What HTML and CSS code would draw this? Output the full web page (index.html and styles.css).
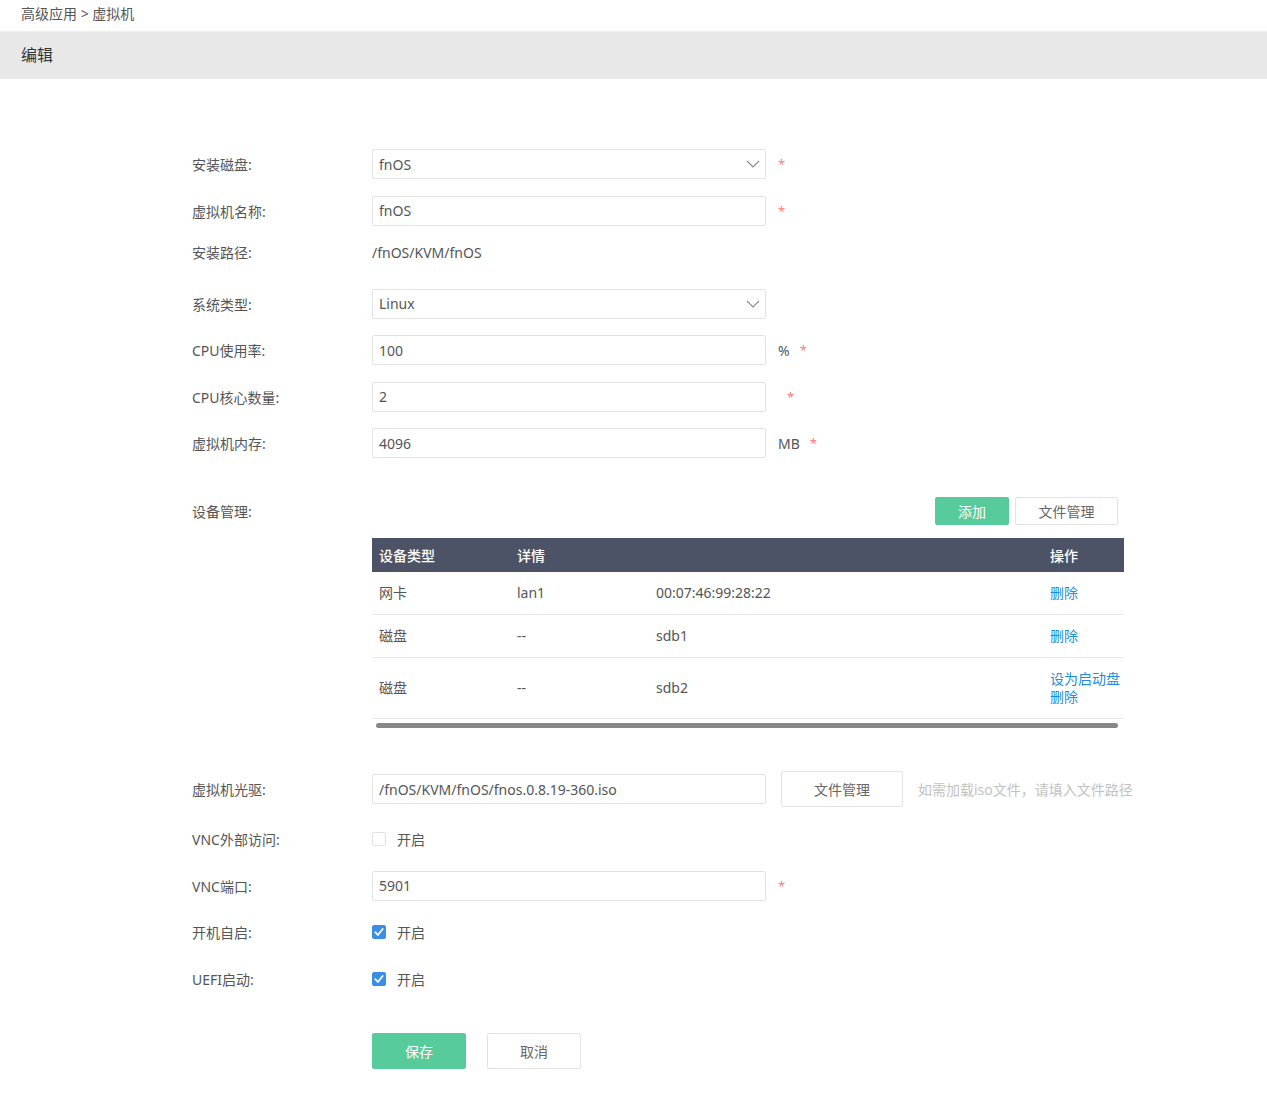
FILE: index.html
```html
<!DOCTYPE html>
<html lang="zh">
<head>
<meta charset="utf-8">
<title>编辑</title>
<link rel="stylesheet" href="styles.css">
</head>
<body>
<div class="crumb">高级应用 &gt; 虚拟机</div>
<div class="titlebar">编辑</div>
<main class="form">
  <div class="row">
    <div class="label">安装磁盘:</div>
    <div class="select"><span>fnOS</span><svg class="chev" viewBox="0 0 14 8" width="14" height="8"><path d="M1 1l6 6 6-6" fill="none" stroke="#888" stroke-width="1.1"/></svg></div>
    <span class="req r0">*</span>
  </div>
  <div class="row">
    <div class="label">虚拟机名称:</div>
    <div class="input">fnOS</div>
    <span class="req r0">*</span>
  </div>
  <div class="row top">
    <div class="label">安装路径:</div>
    <div class="plain">/fnOS/KVM/fnOS</div>
  </div>
  <div class="row">
    <div class="label">系统类型:</div>
    <div class="select"><span>Linux</span><svg class="chev" viewBox="0 0 14 8" width="14" height="8"><path d="M1 1l6 6 6-6" fill="none" stroke="#888" stroke-width="1.1"/></svg></div>
  </div>
  <div class="row">
    <div class="label">CPU使用率:</div>
    <div class="input">100</div>
    <span class="unit">%</span><span class="req">*</span>
  </div>
  <div class="row">
    <div class="label">CPU核心数量:</div>
    <div class="input">2</div>
    <span class="req r1">*</span>
  </div>
  <div class="row">
    <div class="label">虚拟机内存:</div>
    <div class="input">4096</div>
    <span class="unit">MB</span><span class="req">*</span>
  </div>

  <section class="devices">
    <div class="label dlabel">设备管理:</div>
    <div class="dbody">
      <div class="toolbar">
        <button class="btn green small">添加</button>
        <button class="btn white small">文件管理</button>
      </div>
      <table class="dtable">
        <thead>
          <tr><th class="c1">设备类型</th><th class="c2">详情</th><th class="c3"></th><th class="c4">操作</th></tr>
        </thead>
        <tbody>
          <tr><td>网卡</td><td>lan1</td><td>00:07:46:99:28:22</td><td><a>删除</a></td></tr>
          <tr><td>磁盘</td><td>--</td><td>sdb1</td><td><a>删除</a></td></tr>
          <tr><td>磁盘</td><td>--</td><td>sdb2</td><td><a>设为启动盘</a><br><a>删除</a></td></tr>
        </tbody>
      </table>
      <div class="scroll"><div class="thumb"></div></div>
    </div>
  </section>

  <div class="row tall">
    <div class="label">虚拟机光驱:</div>
    <div class="input">/fnOS/KVM/fnOS/fnos.0.8.19-360.iso</div>
    <button class="btn white fm">文件管理</button>
    <span class="hint">如需加载iso文件，请填入文件路径</span>
  </div>
  <div class="row">
    <div class="label">VNC外部访问:</div>
    <span class="cb"></span><span class="cbtext">开启</span>
  </div>
  <div class="row">
    <div class="label">VNC端口:</div>
    <div class="input">5901</div>
    <span class="req r0">*</span>
  </div>
  <div class="row">
    <div class="label">开机自启:</div>
    <span class="cb on"><svg viewBox="0 0 14 14" width="14" height="14"><path d="M3.3 7.2l2.6 2.8 4.8-6" fill="none" stroke="#fff" stroke-width="1.8" stroke-linecap="round" stroke-linejoin="round"/></svg></span><span class="cbtext">开启</span>
  </div>
  <div class="row">
    <div class="label">UEFI启动:</div>
    <span class="cb on"><svg viewBox="0 0 14 14" width="14" height="14"><path d="M3.3 7.2l2.6 2.8 4.8-6" fill="none" stroke="#fff" stroke-width="1.8" stroke-linecap="round" stroke-linejoin="round"/></svg></span><span class="cbtext">开启</span>
  </div>
  <div class="actions">
    <button class="btn green big">保存</button>
    <button class="btn white big">取消</button>
  </div>
</main>
</body>
</html>
```
FILE: styles.css
```css
* { box-sizing: border-box; }
body {
  margin: 0;
  font-family: "Noto Sans", "Noto Sans CJK SC", sans-serif;
  font-size: 14px;
  color: #555;
  background: #fff;
}
.crumb {
  height: 31px;
  line-height: 28px;
  padding-left: 21px;
  color: #555;
}
.titlebar {
  height: 48px;
  line-height: 46px;
  background: #e8e8e8;
  border-top: 1px solid #f0f0f0;
  padding-left: 21px;
  font-size: 16px;
  color: #333;
}
.form {
  padding: 70px 0 40px 192px;
}
.row {
  display: flex;
  align-items: center;
  height: 30px;
  margin-bottom: 16.5px;
}
.row.top { align-items: flex-start; line-height: 22px; }
.label {
  width: 180px;
  flex: none;
  color: #555;
}
.input, .select {
  width: 394px;
  height: 30px;
  border: 1px solid #e3e3e3;
  border-radius: 2px;
  padding: 0 6px;
  display: flex;
  align-items: center;
  color: #555;
  flex: none;
}
.select { justify-content: space-between; padding-right: 5px; }
.plain { color: #555; }
.req {
  color: #ff7b7b;
  font-size: 13px;
  margin-left: 10px;
}
.req.r0 { margin-left: 12px; }
.req.r1 { margin-left: 21px; }
.unit { margin-left: 12px; color: #555; }
.devices {
  display: flex;
  margin-top: 39px;
}
.dlabel { padding-top: 5px; line-height: 20px; }
.dbody { width: 752px; }
.toolbar {
  display: flex;
  justify-content: flex-end;
  gap: 6px;
  padding-right: 6px;
  margin-bottom: 13px;
}
.btn {
  font-family: inherit;
  font-size: 14px;
  border-radius: 2px;
  cursor: pointer;
  padding: 0;
}
.btn.green { background: #58cb9d; color: #fff; border: 1px solid #58cb9d; }
.btn.white { background: #fff; color: #666; border: 1px solid #e3e3e3; }
.btn.small { height: 28px; }
.btn.small.green { width: 74px; }
.btn.small.white { width: 103px; }
.dtable {
  width: 100%;
  border-collapse: collapse;
  table-layout: fixed;
}
.dtable th {
  background: #4d5366;
  color: #fff;
  font-weight: 500;
  text-align: left;
  height: 34px;
  padding: 0 7px;
}
.c1 { width: 138px; }
.c2 { width: 139px; }
.c4 { width: 81px; }
.dtable td {
  padding: 12px 7px;
  line-height: 18px;
  border-bottom: 1px solid #e8e8e8;
  color: #555;
  vertical-align: middle;
  white-space: nowrap;
}
.dtable a { color: #1b8ddb; cursor: pointer; }
.scroll {
  padding: 4px 6px 0 4px;
}
.thumb {
  height: 5px;
  border-radius: 3px;
  background: #888;
}
.row.tall {
  height: 36px;
  margin-top: 43px;
  margin-bottom: 17px;
}
.btn.fm {
  width: 122px;
  height: 36px;
  margin-left: 15px;
}
.hint {
  margin-left: 15px;
  color: #c2c2c2;
}
.cb {
  width: 14px;
  height: 14px;
  border: 1px solid #e3e3e3;
  border-radius: 2px;
  display: inline-flex;
  flex: none;
}
.cb.on { background: #3a8ee6; border-color: #3a8ee6; }
.cb.on svg { margin: -1px; }
.cbtext { margin-left: 11px; color: #555; }
.actions {
  display: flex;
  gap: 21px;
  margin-left: 180px;
  margin-top: 39.5px;
}
.btn.big { width: 94px; height: 36px; }
```
